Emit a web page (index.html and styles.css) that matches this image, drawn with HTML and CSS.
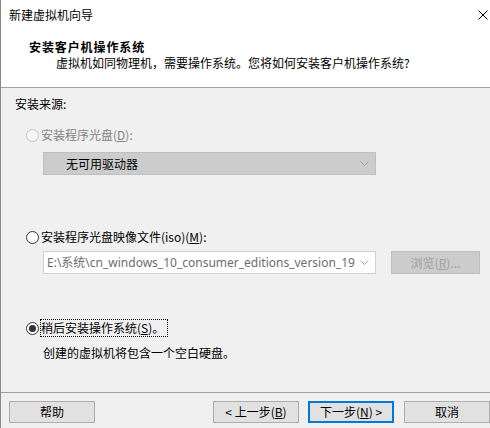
FILE: index.html
```html
<!DOCTYPE html>
<html lang="zh-CN">
<head>
    <meta charset="UTF-8">
    <title>新建虚拟机向导</title>
    <link rel="stylesheet" href="styles.css">
</head>
<body>
    <div class="window">
        <div class="titlebar">
            <span class="title">新建虚拟机向导</span>
            <svg class="close" width="10" height="10" viewBox="0 0 10 10">
                <path d="M0.5 0.5 L9.5 9.5 M9.5 0.5 L0.5 9.5" stroke="#000" stroke-width="1"/>
            </svg>
        </div>
        <div class="header">
            <div class="header-title">安装客户机操作系统</div>
            <div class="header-sub">虚拟机如同物理机，需要操作系统。您将如何安装客户机操作系统?</div>
        </div>
        <div class="content">
            <div class="group-label">安装来源:</div>

            <div class="radio-row disabled row-1">
                <span class="radio"></span>
                <span class="radio-text">安装程序光盘(<u>D</u>):</span>
            </div>
            <div class="combo combo-disabled">
                <span class="combo-text">无可用驱动器</span>
                <svg class="chevron" width="9" height="5" viewBox="0 0 9 5">
                    <polyline points="0.5,0.5 4.5,4.5 8.5,0.5" fill="none" stroke="#a6a6a6" stroke-width="1"/>
                </svg>
            </div>

            <div class="radio-row row-2">
                <span class="radio"></span>
                <span class="radio-text">安装程序光盘映像文件(iso)(<u>M</u>):</span>
            </div>
            <div class="iso-row">
                <div class="combo combo-iso">
                    <span class="combo-text">E:\系统\cn_windows_10_consumer_editions_version_19</span>
                    <svg class="chevron" width="9" height="5" viewBox="0 0 9 5">
                        <polyline points="0.5,0.5 4.5,4.5 8.5,0.5" fill="none" stroke="#a6a6a6" stroke-width="1"/>
                    </svg>
                </div>
                <div class="btn btn-disabled">浏览(<u>R</u>)...</div>
            </div>

            <div class="radio-row row-3">
                <span class="radio checked"></span>
                <span class="radio-text focus">稍后安装操作系统(<u>S</u>)。</span>
            </div>
            <div class="desc">创建的虚拟机将包含一个空白硬盘。</div>
        </div>
        <div class="footer">
            <div class="btn">帮助</div>
            <div class="nav">
                <div class="btn">&lt; 上一步(<u>B</u>)</div>
                <div class="btn btn-default">下一步(<u>N</u>) &gt;</div>
                <div class="btn">取消</div>
            </div>
        </div>
    </div>
</body>
</html>
```

FILE: styles.css
```css
body {
    margin: 0;
    width: 490px;
    height: 428px;
    overflow: hidden;
    font-family: "Noto Sans CJK SC", "Microsoft YaHei", sans-serif;
    font-size: 12px;
    line-height: 16px;
    color: #000;
}
u {
    text-decoration: underline;
    text-underline-offset: 1px;
}
.window {
    height: 428px;
    border-left: 1px solid #8a8a8a;
    display: flex;
    flex-direction: column;
    background: #f0f0f0;
}
.titlebar {
    height: 30px;
    flex: none;
    background: #fff;
    display: flex;
    align-items: center;
    padding: 0 2px 0 8px;
}
.title {
    flex: 1;
}
.close {
    display: block;
}
.header {
    flex: none;
    background: #fff;
    border-bottom: 1px solid #a0a0a0;
    padding-top: 9px;
    box-sizing: border-box;
    height: 58px;
}
.header-title {
    font-weight: bold;
    padding-left: 28px;
    letter-spacing: 0.9px;
}
.header-sub {
    padding-left: 55px;
}
.content {
    height: 305px;
    flex: none;
    padding-top: 8px;
    box-sizing: border-box;
    border-bottom: 1px solid #a0a0a0;
}
.group-label {
    padding-left: 14px;
}
.radio-row {
    display: flex;
    align-items: center;
    height: 16px;
    padding-left: 25px;
}
.row-1 { margin-top: 15px; }
.row-2 { margin-top: 54px; }
.row-3 { margin-top: 46px; }
.radio {
    width: 13px;
    height: 13px;
    box-sizing: border-box;
    border: 1px solid #333;
    border-radius: 50%;
    background: #fff;
    margin-right: 2px;
    position: relative;
    flex: none;
}
.disabled .radio {
    border-color: #c4c4c4;
    background: #f6f6f6;
}
.disabled .radio-text {
    color: #838383;
}
.radio.checked::after {
    content: "";
    position: absolute;
    left: 2px;
    top: 2px;
    width: 7px;
    height: 7px;
    border-radius: 50%;
    background: #333;
}
.focus {
    outline: 1px dotted #000;
    outline-offset: 0;
    padding-right: 3px;
}
.desc {
    margin-top: 9px;
    padding-left: 42px;
}
.combo {
    height: 23px;
    box-sizing: border-box;
    width: 333px;
    margin-left: 42px;
    display: flex;
    align-items: center;
    padding: 0 6px 0 3px;
}
.combo-disabled {
    margin-top: 9px;
    background: #cccccc;
    border: 1px solid #bfbfbf;
}
.combo-disabled .combo-text {
    padding-left: 19px;
}
.combo-text {
    flex: 1;
    overflow: hidden;
    white-space: nowrap;
}
.chevron {
    flex: none;
    margin-left: 4px;
}
.iso-row {
    display: flex;
    margin-top: 6px;
}
.combo-iso {
    background: #fff;
    border: 1px solid #d0d0d0;
}
.combo-iso .combo-text {
    color: #6d6d6d;
    font-family: "Noto Sans", "Noto Sans CJK SC", sans-serif;
}
.iso-row .btn-disabled {
    margin-left: 15px;
    width: 89px;
    height: 23px;
}
.btn {
    width: 86px;
    height: 22px;
    box-sizing: border-box;
    background: #e1e1e1;
    border: 1px solid #adadad;
    display: flex;
    align-items: center;
    justify-content: center;
}
.btn-disabled {
    background: #cccccc;
    border-color: #bfbfbf;
    color: #a0a0a0;
}
.btn-default {
    border: 2px solid #0078d7;
}
.footer {
    flex: 1;
    display: flex;
    justify-content: space-between;
    padding: 8px 0 0 8px;
}
.nav {
    display: flex;
    gap: 9px;
}
.nav .btn-default {
    margin-right: 1px;
}
```
